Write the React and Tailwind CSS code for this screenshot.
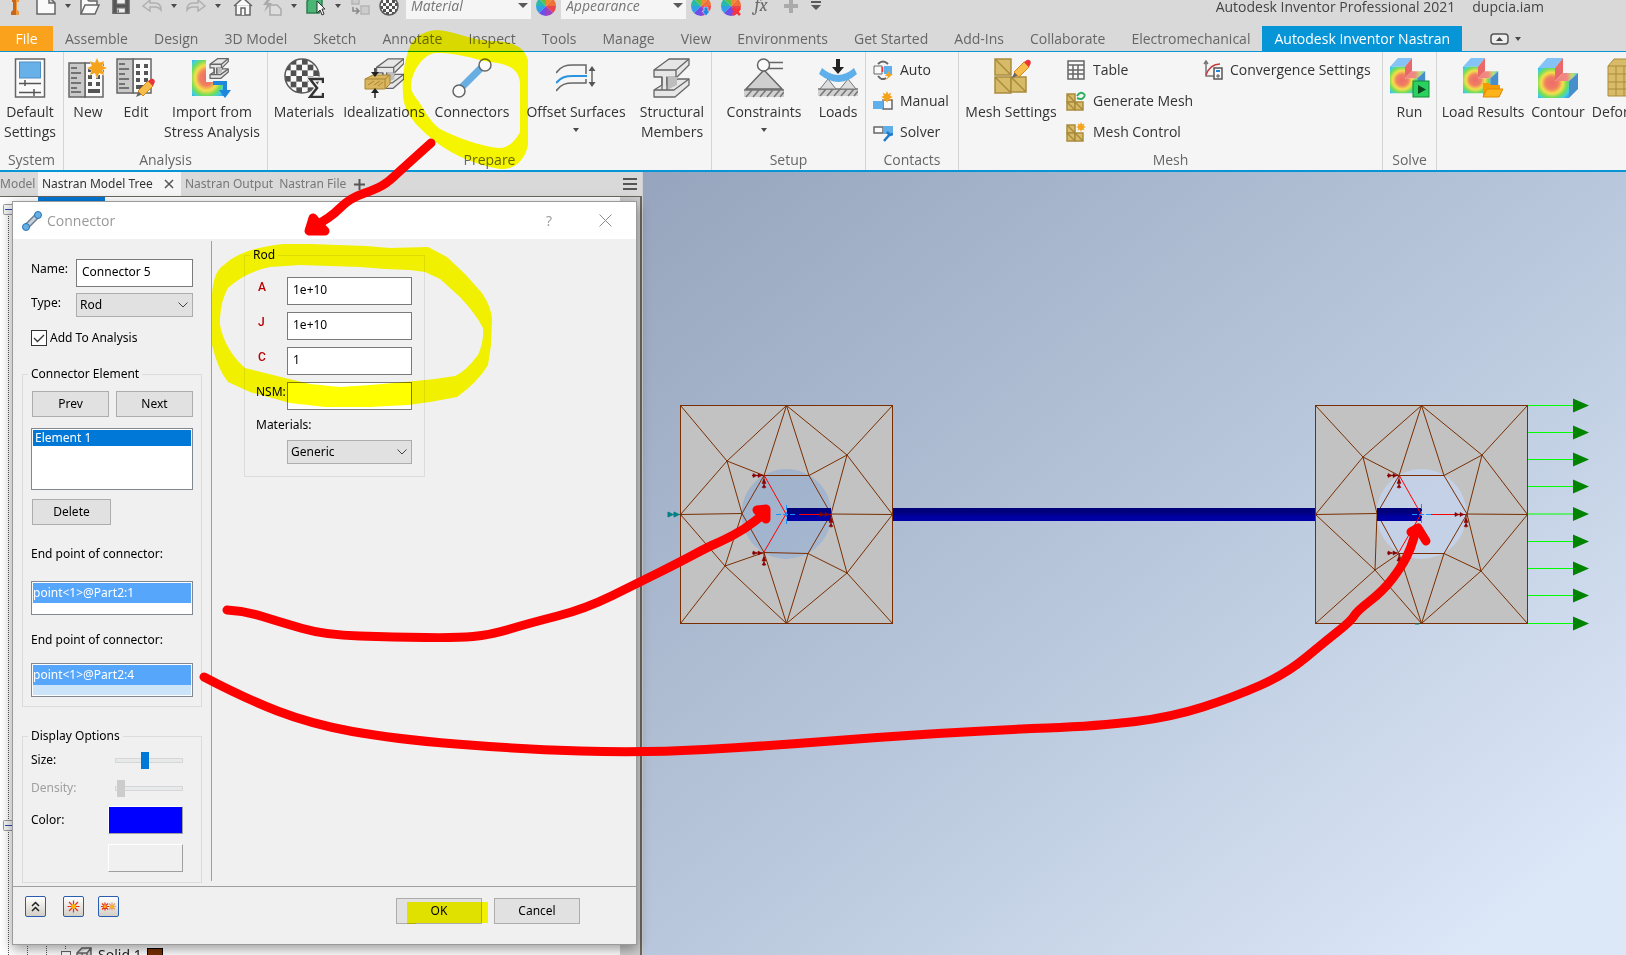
import { useState } from "react";

const tabs = [
  "Assemble",
  "Design",
  "3D Model",
  "Sketch",
  "Annotate",
  "Inspect",
  "Tools",
  "Manage",
  "View",
  "Environments",
  "Get Started",
  "Add-Ins",
  "Collaborate",
  "Electromechanical",
];

/* ---------- small icons of the quick access bar ---------- */

function Caret() {
  return (
    <svg className="w-[6px] shrink-0" viewBox="0 0 6 4" fill="#4a4a4a">
      <path d="M0 0h6L3 4z" />
    </svg>
  );
}

function QIcon({ label, children, className = "w-5" }) {
  return (
    <button aria-label={label} className={`${className} shrink-0`}>
      <svg className="h-5 w-full" viewBox="0 0 20 20" fill="none" stroke="#666" strokeWidth="1.5">
        {children}
      </svg>
    </button>
  );
}

function Wheel({ children }) {
  const colors = ["#f2892f", "#f0703a", "#e8454d", "#a03fc0", "#6b4fe8", "#2f9fe8", "#27b9a9", "#5fc048"];
  return (
    <svg className="h-5 w-5 shrink-0" viewBox="0 0 20 20">
      {colors.map((c, i) => {
        const a = (i * Math.PI) / 4 - Math.PI / 2;
        const b = a + Math.PI / 4;
        return (
          <path
            key={c}
            fill={c}
            d={`M10 10L${10 + 10 * Math.cos(a)} ${10 + 10 * Math.sin(a)}A10 10 0 0 1 ${10 + 10 * Math.cos(b)} ${10 + 10 * Math.sin(b)}z`}
          />
        );
      })}
      {children}
    </svg>
  );
}

function Checker({ cx, cy, r, id }) {
  return (
    <g>
      <clipPath id={id}>
        <circle cx={cx} cy={cy} r={r} />
      </clipPath>
      <g clipPath={`url(#${id})`} stroke="none">
        <rect x={cx - r} y={cy - r} width={2 * r} height={2 * r} fill="#fafafa" />
        {[0, 1, 2, 3, 4, 5].map((i) =>
          [0, 1, 2, 3, 4, 5].map((j) =>
            (i + j) % 2 ? (
              <rect
                key={`${i}-${j}`}
                x={cx - r + (i * r) / 3}
                y={cy - r + (j * r) / 3}
                width={r / 3}
                height={r / 3}
                fill="#505050"
              />
            ) : null
          )
        )}
      </g>
      <circle cx={cx} cy={cy} r={r} fill="none" stroke="#5a5a5a" strokeWidth="1.5" />
    </g>
  );
}

function PickBox({ label }) {
  return (
    <div className="grid w-[125px] shrink-0 items-center bg-[#f5f5f5]">
      <select
        aria-label={label}
        className="col-start-1 row-start-1 h-[27px] appearance-none pl-[5px] text-sm leading-4 text-[#777] italic"
      >
        <option>{label}</option>
      </select>
      <svg
        className="pointer-events-none col-start-1 row-start-1 mr-[3px] w-[10px] justify-self-end"
        viewBox="0 0 10 5"
        fill="#5a5a5a"
      >
        <path d="M0 0h10L5 5z" />
      </svg>
    </div>
  );
}

function QuickAccess() {
  return (
    <div className="h-[26px] overflow-hidden">
      <div className="-mt-2 flex h-[27px] items-center pl-[3px]">
        <div className="flex items-center gap-[9px]">
          <QIcon label="Inventor" className="w-6">
            <path d="M7 3h7v3h-2v8l2 2v3H6v-3l2-2V6H7z" fill="#c8661c" stroke="none" />
            <path d="M11 3h3v3h-2v8l2 2v3h-3z" fill="#f09a3e" stroke="none" />
          </QIcon>
          <QIcon label="New">
            <path d="M1 1h12l6 6v11H1zM13 1v6h6" fill="#fafafa" />
          </QIcon>
          <Caret />
          <QIcon label="Open">
            <path d="M1 18V3h6l2 2h8v4" fill="#fafafa" />
            <path d="M1 18l4-9h14l-4 9z" fill="#fafafa" />
          </QIcon>
        </div>
        <div className="ml-3 flex items-center gap-3">
          <QIcon label="Save" className="w-[18px]">
            <path d="M1 2h18v16H1z" fill="#555" />
            <path d="M5 2h10v6H5zM5 12h10v6H5z" fill="#eee" />
            <path d="M7 14v3" />
          </QIcon>
          <div className="flex items-center gap-[9px]">
            <QIcon label="Undo">
              <path d="M1 10l7-6v3h5c4 0 6 3 6 7-2-3-4-3-6-3H8v4z" stroke="#b0b0b0" />
            </QIcon>
            <Caret />
            <QIcon label="Redo">
              <path d="M19 10l-7-6v3H7c-4 0-6 3-6 7 2-3 4-3 6-3h5v4z" stroke="#b0b0b0" />
            </QIcon>
            <Caret />
          </div>
          <div className="flex items-center gap-[9px]">
            <QIcon label="Home">
              <path d="M3 9v10h14V9M1 10l9-8 9 8" fill="#fafafa" />
              <path d="M8 19v-7h4v7" fill="#fafafa" />
            </QIcon>
            <QIcon label="Update">
              <path d="M7 1L1 9h4l-3 7 8-9H6l4-6z" fill="#aaa" stroke="none" />
              <path d="M8 9h7l4 4v6H8z" fill="#ddd" stroke="#aaa" />
            </QIcon>
            <Caret />
            <QIcon label="Select">
              <path d="M1 5l4-3h11v11l-3 4H1z" fill="#49b675" stroke="#2f7f50" />
              <path d="M11 5v12l3-3 2 5 2-1-2-5h3z" fill="#f5f5f5" stroke="#333" strokeWidth="1" />
            </QIcon>
            <Caret />
            <QIcon label="Return">
              <path d="M2 1h7v7H2zM11 10h8v8h-8z" fill="#ccc" stroke="#b5b5b5" />
              <path d="M3 11v4h5M6 12l3 3-3 3" stroke="#888" />
            </QIcon>
            <QIcon label="Material browser">
              <Checker cx={10} cy={10} r={9} id="qchk" />
            </QIcon>
          </div>
        </div>
        <div className="ml-[7px] flex items-center gap-[5px]">
          <PickBox label="Material" />
          <Wheel />
          <PickBox label="Appearance" />
          <div className="flex items-center gap-[10px]">
            <Wheel>
              <path d="M13 11h4v4h2l-4 5-4-5h2z" fill="#1e88e5" stroke="#fff" strokeWidth=".5" />
            </Wheel>
            <Wheel>
              <path d="M12 12l7 7M19 12l-7 7" stroke="#f33" strokeWidth="2.5" />
            </Wheel>
            <button className="w-5 font-serif text-lg leading-4 text-[#6a6a6a] italic">fx</button>
            <QIcon label="Add">
              <path d="M8 3h4v5h5v4h-5v5H8v-5H3V8h5z" fill="#aaa" stroke="none" />
            </QIcon>
            <svg className="w-[10px]" viewBox="0 0 10 9" fill="#5a5a5a">
              <path d="M0 0h10v2H0zM0 4h10L5 9z" />
            </svg>
          </div>
        </div>
        <div className="mr-[82px] ml-auto flex gap-[17px] pt-[3px] text-sm leading-none whitespace-nowrap text-[#444]">
          <span>Autodesk Inventor Professional 2021</span>
          <span>dupcia.iam</span>
        </div>
      </div>
    </div>
  );
}

function TabRow() {
  return (
    <nav className="flex h-[26px] items-stretch border-b border-[#0696d7] text-sm whitespace-nowrap text-[#666]">
      <button className="w-[53px] bg-[#faa21b] text-white">File</button>
      <div className="flex gap-[2px]">
        {tabs.map((t) => (
          <button key={t} className="px-3">
            {t}
          </button>
        ))}
      </div>
      <button className="bg-[#0696d7] px-3 text-white">Autodesk Inventor Nastran</button>
      <button aria-label="Minimize ribbon" className="ml-7 flex items-center gap-[6px]">
        <svg className="h-3 w-[19px]" viewBox="0 0 19 12">
          <rect x="1" y="1" width="17" height="10" rx="3" fill="#eee" stroke="#555" strokeWidth="1.5" />
          <path d="M6 8h7L9.500 4z" fill="#444" />
        </svg>
        <Caret />
      </button>
    </nav>
  );
}

/* ---------- large ribbon icons, 40 x 40 ---------- */

function Star({ x, y, r, fill = "#f5a31a" }) {
  const pts = [];
  for (let i = 0; i < 16; i++) {
    const a = (i * Math.PI) / 8;
    const d = i % 2 ? r * 0.55 : r;
    pts.push(`${x + d * Math.sin(a)},${y - d * Math.cos(a)}`);
  }
  return <polygon points={pts.join(" ")} fill={fill} stroke="none" />;
}

function DefaultIcon() {
  return (
    <g>
      <rect x="5.500" y="1" width="29" height="38" fill="#fafafa" stroke="#666" strokeWidth="1.5" />
      <rect x="9.500" y="4" width="21" height="16" fill="#68b1e8" stroke="#4d8fc4" />
      <path d="M9 25.500h22M9 34.500h22M15 22v6M24 31v7" stroke="#555" strokeWidth="1.5" fill="none" />
    </g>
  );
}

function Sheets() {
  return (
    <g>
      <path d="M17 5h18v34H17z" fill="#fafafa" stroke="#666" strokeWidth="1.500" />
      <path d="M1 5h16v34H1z" fill="#c9c9c9" stroke="#666" strokeWidth="1.500" />
      <path d="M3 10h6M3 15h10M3 20h6M3 25h10M3 30h6M3 34h10" stroke="#555" strokeWidth="1.500" />
      <path d="M20 10h4v4h-4zM28 10h4v4h-4zM20 17h4v4h-4zM28 17h4v4h-4zM20 24h4v4h-4zM28 24h4v4h-4zM20 31h12v4H20z" fill="#555" />
    </g>
  );
}

function NewIcon() {
  return (
    <g>
      <Sheets />
      <Star x={29} y={10} r={11} fill="#f5f5f5" />
      <Star x={29} y={10} r={10} />
    </g>
  );
}

function Pencil({ x = 0, y = 0 }) {
  return (
    <g transform={`translate(${x} ${y})`}>
      <path d="M0 19l3-7 4 4z" fill="#666" />
      <path d="M2 13L12 3l5 5L7 18z" fill="#f7bd4a" stroke="#d08a1c" />
      <path d="M12 3l3-2c3-1 5 2 3 5l-1 2z" fill="#ee3338" />
    </g>
  );
}

function EditIcon() {
  return (
    <g>
      <g transform="translate(0 -4)">
        <Sheets />
      </g>
      <Pencil x={20} y={20} />
    </g>
  );
}

function Beam({ scale = 1, x = 0, y = 0 }) {
  return (
    <g transform={`translate(${x} ${y}) scale(${scale})`} stroke="#666" strokeWidth={1.3 / scale} strokeLinejoin="round">
      <path d="M2 12L17 1h20v6L25 19H15v8l11-6h11v6L23 39H2v-7l8-5V19H2z" fill="#e6e6e6" />
      <path d="M15 18h10v9l-10 5z" fill="#bdbdbd" stroke="none" />
      <path d="M2 12h22L37 1M24 12v7M10 19v13M15 19v13M2 32h20l15-11" fill="none" />
    </g>
  );
}

function ImportIcon() {
  return (
    <g>
      <path d="M0 2h14v22h18v14H0z" fill="url(#heat)" />
      <Beam scale={0.52} x={17} y={0} />
      <path d="M21 23h14v9h4l-6 8-6-8h4v-5H21z" fill="#1f86dd" />
    </g>
  );
}

function MaterialsIcon() {
  return (
    <g>
      <Checker cx={18} cy={18} r={17} id="mchk" />
      <path d="M39 25V21H26l7 9-7 9h13v-4" fill="none" stroke="#f5f5f5" strokeWidth="5" />
      <path d="M39 25V21H26l7 9-7 9h13v-4" fill="none" stroke="#333" strokeWidth="2.500" />
    </g>
  );
}

function IdealIcon() {
  return (
    <g>
      <Beam scale={0.78} x={11} y={0} />
      <path d="M1 21l8-4h17v9l-5 5H1z" fill="#d8b55e" stroke="#a8852f" />
      <path d="M1 21h20l5-4M21 21v9M4 27l6-4M10 27l6-4M14 28l5-4" fill="none" stroke="#a8852f" />
      <path d="M11 10v5M11 33v7" stroke="#222" strokeWidth="1.500" />
      <path d="M7 14h8l-4 5zM7 35h8l-4-5z" fill="#222" />
    </g>
  );
}

function ConnectorIcon() {
  return (
    <g>
      <path d="M10 29L29 10" stroke="#68aee3" strokeWidth="7" />
      <circle cx="7" cy="33" r="6" fill="#fafafa" stroke="#666" strokeWidth="1.500" />
      <circle cx="33" cy="7" r="6" fill="#fafafa" stroke="#666" strokeWidth="1.500" />
    </g>
  );
}

function OffsetIcon() {
  return (
    <g fill="none" stroke="#666" strokeWidth="1.500">
      <path d="M0 15C5 8 10 7 17 7h13v9M0 33c5-7 10-8 17-8h13v-4" />
      <path d="M0 25c5-6 10-7 17-7h14" stroke="#2a93e0" strokeWidth="2" />
      <path d="M36 10v17" />
      <path d="M32.500 13l3.500-5 3.500 5zM32.500 24l3.500 5 3.500-5z" fill="#555" stroke="none" />
    </g>
  );
}

function Hatch() {
  return (
    <g>
      <rect x="0" y="32" width="40" height="7" fill="#d0d0d0" />
      <path d="M0 32h40M2 39l6-7M9 39l6-7M16 39l6-7M23 39l6-7M30 39l6-7M36 39l4-5" stroke="#777" strokeWidth="1.500" />
    </g>
  );
}

function ConstraintIcon() {
  return (
    <g>
      <Hatch />
      <path d="M20 12L2 31h36z" fill="#cfcfcf" stroke="#666" strokeWidth="1.500" />
      <path d="M24 4.500h15M24 10.500h15" stroke="#666" strokeWidth="1.500" />
      <circle cx="19.500" cy="7" r="6" fill="#fafafa" stroke="#666" strokeWidth="1.500" />
    </g>
  );
}

function LoadsIcon() {
  return (
    <g>
      <g transform="translate(0 -1)">
        <Hatch />
      </g>
      <path d="M10 21L2 31h16zM30 21l-8 10h16z" fill="#ddd" stroke="#777" />
      <path d="M4 10q16 14 32 0l3 6q-18 16-38 0z" fill="#5fb0ea" />
      <path d="M18 1h4v8h4l-6 7-6-7h4z" fill="#222" />
    </g>
  );
}

function Crate({ x, y, s }) {
  return (
    <path
      d={`M${x} ${y}h${s}v${s}h${-s}zl${s} ${s}`}
      fill="#d8bb68"
      stroke="#a98c3c"
      strokeWidth="1.500"
    />
  );
}

function MeshIcon() {
  return (
    <g>
      <Crate x={4} y={1} s={16} />
      <Crate x={4} y={19} s={16} />
      <Crate x={20} y={19} s={15} />
      <Pencil x={21} y={1} />
    </g>
  );
}

function Cube() {
  return (
    <g>
      <path d="M0 10L9 0h16l-8 10z" fill="#83c3f7" />
      <path d="M0 10h17v13h14v17H0z" fill="url(#heat)" />
      <path d="M17 10l8-10v15l-8 8z" fill="#e9696a" />
      <path d="M17 23l8-8h15l-9 8z" fill="url(#step)" />
      <path d="M31 23l9-8v16l-9 9z" fill="#478fcb" />
    </g>
  );
}

function RunIcon() {
  return (
    <g>
      <g transform="scale(.88)">
        <Cube />
      </g>
      <rect x="23" y="23" width="16" height="16" fill="#2bd160" stroke="#138a38" />
      <path d="M28 27v9l8-4.500z" fill="#0a4a1c" />
    </g>
  );
}

function LoadResultsIcon() {
  return (
    <g>
      <g transform="scale(.88)">
        <Cube />
      </g>
      <path d="M20 39V25h6l2 2h9v4h3l-4 8z" fill="#f59b00" />
      <path d="M20 39l4-8h16l-4 8z" fill="#ffb31a" stroke="#e08900" />
    </g>
  );
}

function DeformIcon() {
  return (
    <g fill="#d8bb68" stroke="#a98c3c">
      <path d="M3 38V8l6-7h22v10h8v20l-8 7z" />
      <path d="M3 8h24l6-7M3 16h24M3 24h33M3 31h33M11 8v30M19 8v30M27 8v30" fill="none" />
    </g>
  );
}

/* ---------- ribbon ---------- */

function Panel({ title, className, children }) {
  return (
    <section className={`${className} flex flex-col border-r border-[#d4d4d4]`}>
      <div className="flex flex-1">{children}</div>
      <h2 className="h-5 text-center text-sm text-[#666]">{title}</h2>
    </section>
  );
}

function Tool({ icon, lines, menu, className }) {
  return (
    <button className={`${className} flex shrink-0 flex-col items-center pt-[6px] whitespace-nowrap`}>
      <svg className="mb-1 h-10 w-10 shrink-0" viewBox="0 0 40 40">
        {icon}
      </svg>
      {lines.map((l) => (
        <span key={l} className="leading-5">
          {l}
        </span>
      ))}
      {menu && (
        <span className="flex h-4 items-center">
          <Caret />
        </span>
      )}
    </button>
  );
}

function SmallTool({ icon, label }) {
  return (
    <button className="flex h-[31px] items-center gap-[7px] whitespace-nowrap">
      <svg className="h-5 w-5 shrink-0" viewBox="0 0 20 20">
        {icon}
      </svg>
      {label}
    </button>
  );
}

function Ribbon() {
  return (
    <div className="flex h-[120px] shrink-0 overflow-hidden border-b-2 border-[#0696d7] bg-[#f5f5f5] text-sm text-[#333]">
      <Panel title="System" className="w-16 shrink-0">
        <Tool icon={<DefaultIcon />} lines={["Default", "Settings"]} className="w-[60px]" />
      </Panel>
      <Panel title="Analysis" className="w-[204px] shrink-0">
        <Tool icon={<NewIcon />} lines={["New"]} className="w-12" />
        <Tool icon={<EditIcon />} lines={["Edit"]} className="w-12" />
        <Tool icon={<ImportIcon />} lines={["Import from", "Stress Analysis"]} className="w-[104px]" />
      </Panel>
      <Panel title="Prepare" className="w-[444px] shrink-0">
        <Tool icon={<MaterialsIcon />} lines={["Materials"]} className="w-[72px]" />
        <Tool icon={<IdealIcon />} lines={["Idealizations"]} className="w-[88px]" />
        <Tool icon={<ConnectorIcon />} lines={["Connectors"]} className="w-[88px]" />
        <Tool icon={<OffsetIcon />} lines={["Offset Surfaces"]} menu className="w-[120px]" />
        <Tool icon={<Beam />} lines={["Structural", "Members"]} className="w-[72px]" />
      </Panel>
      <Panel title="Setup" className="w-[154px] shrink-0">
        <Tool icon={<ConstraintIcon />} lines={["Constraints"]} menu className="w-[104px]" />
        <Tool icon={<LoadsIcon />} lines={["Loads"]} className="w-11" />
      </Panel>
      <Panel title="Contacts" className="w-[93px] shrink-0">
        <div className="flex flex-col pt-[2px] pl-[7px]">
          <SmallTool
            label="Auto"
            icon={
              <g>
                <path d="M1 6h8v8H1z" fill="#fafafa" stroke="#666" />
                <path d="M11 6h8v8h-8z" fill="#5fb0ea" />
                <path d="M5 4q5-5 10 0M5 16q4 5 8 2" fill="none" stroke="#666" strokeWidth="2" />
                <path d="M9.500 7v5" stroke="#e33" strokeWidth="1.500" />
                <path d="M17 10l-5 6h3l-2 4 7-6h-3z" fill="#f5a31a" />
              </g>
            }
          />
          <SmallTool
            label="Manual"
            icon={
              <g>
                <path d="M10 9h9v9H10z" fill="#fafafa" stroke="#666" strokeWidth="1.500" />
                <path d="M0 10h10v8H0z" fill="#5fb0ea" />
                <Star x={14} y={6} r={6} />
              </g>
            }
          />
          <SmallTool
            label="Solver"
            icon={
              <g>
                <path d="M1 5h9v6H1z" fill="#fafafa" stroke="#666" strokeWidth="1.500" />
                <path d="M10 4h10v8H10z" fill="#5fb0ea" />
                <path d="M11 19l6-7M14 10l3 3 3-1" stroke="#1f78c8" strokeWidth="2.500" fill="none" />
              </g>
            }
          />
        </div>
      </Panel>
      <Panel title="Mesh" className="w-[424px] shrink-0">
        <Tool icon={<MeshIcon />} lines={["Mesh Settings"]} className="w-[104px]" />
        <div className="flex w-[140px] flex-col pt-[2px] pl-[3px]">
          <SmallTool
            label="Table"
            icon={
              <path
                d="M2 1h16v18H2zM2 5h16M2 10h16M2 14h16M7 5v14M12 5v14"
                fill="#fafafa"
                stroke="#666"
                strokeWidth="1.500"
              />
            }
          />
          <SmallTool
            label="Generate Mesh"
            icon={
              <g>
                <Crate x={1} y={3} s={8} />
                <Crate x={1} y={11} s={8} />
                <Crate x={9} y={11} s={8} />
                <path d="M11 5q4-6 8-1M19 4q-2 6-8 3" fill="none" stroke="#2eae5b" strokeWidth="2" />
              </g>
            }
          />
          <SmallTool
            label="Mesh Control"
            icon={
              <g>
                <Crate x={1} y={3} s={8} />
                <Crate x={1} y={11} s={8} />
                <Crate x={9} y={11} s={8} />
                <Star x={15} y={5} r={5} />
              </g>
            }
          />
        </div>
        <div className="flex flex-col pt-[2px]">
          <SmallTool
            label="Convergence Settings"
            icon={
              <g fill="none">
                <path d="M3 1v15h8M1 4l2-3 2 3" stroke="#777" strokeWidth="1.500" />
                <path d="M3 15Q7 4 17 4" stroke="#c73a3a" strokeWidth="1.500" />
                <path d="M11 8h8v11h-8z" fill="#fafafa" stroke="#555" strokeWidth="1.500" />
                <path d="M13 11h4" stroke="#1f86dd" strokeWidth="2" />
                <path d="M13 16h4M15 14v4" stroke="#555" />
              </g>
            }
          />
        </div>
      </Panel>
      <Panel title="Solve" className="w-[54px] shrink-0">
        <Tool icon={<RunIcon />} lines={["Run"]} className="w-[53px]" />
      </Panel>
      <section className="flex min-w-0 flex-1 pl-[2px]">
        <Tool icon={<LoadResultsIcon />} lines={["Load Results"]} className="w-[88px]" />
        <Tool icon={<Cube />} lines={["Contour"]} className="w-[62px]" />
        <Tool icon={<DeformIcon />} lines={["Deformed"]} className="w-[72px]" />
      </section>
    </div>
  );
}

/* ---------- connector dialog ---------- */

function Group({ title, className, children }) {
  return (
    <fieldset className={`${className} border border-[#dcdcdc]`}>
      <legend className="px-[3px] leading-4">{title}</legend>
      {children}
    </fieldset>
  );
}

function TextBox({ id, value }) {
  return (
    <input
      id={id}
      defaultValue={value}
      className="h-7 min-w-0 border border-[#7a7a7a] bg-white pb-1 pl-[5px]"
    />
  );
}

function DropDown({ id, value, className = "" }) {
  return (
    <div className={`${className} grid items-center`}>
      <select
        id={id}
        className="col-start-1 row-start-1 h-6 appearance-none border border-[#adadad] bg-[#e1e1e1] pl-[3px]"
      >
        <option>{value}</option>
      </select>
      <svg
        className="pointer-events-none col-start-1 row-start-1 mr-[5px] w-[10px] justify-self-end"
        viewBox="0 0 10 6"
        fill="none"
        stroke="#444"
      >
        <path d="M.5.5L5 5 9.500.5" />
      </svg>
    </div>
  );
}

function PushButton({ children, className }) {
  return (
    <button className={`${className} h-[26px] border border-[#adadad] bg-[#e1e1e1]`}>{children}</button>
  );
}

function PointList({ label, value, gap = "gap-[17px]", fill = "bg-white" }) {
  return (
    <div className={`${gap} flex flex-col`}>
      <p className="leading-5">{label}</p>
      <div className="h-[34px] border border-[#828790] bg-white p-[1px]">
        <ul role="listbox" aria-label={label} className={`${fill} h-full`}>
          <li role="option" aria-selected="true" className="h-5 bg-[#56a6fb] leading-5 text-white">
            {value}
          </li>
        </ul>
      </div>
    </div>
  );
}

const sliderClass =
  "h-[17px] w-[68px] appearance-none bg-transparent [&::-webkit-slider-runnable-track]:h-[5px] [&::-webkit-slider-runnable-track]:border [&::-webkit-slider-runnable-track]:border-[#d6d6d6] [&::-webkit-slider-runnable-track]:bg-[#e7eaea] [&::-webkit-slider-thumb]:-mt-[7px] [&::-webkit-slider-thumb]:h-[17px] [&::-webkit-slider-thumb]:w-2 [&::-webkit-slider-thumb]:appearance-none [&::-webkit-slider-thumb]:bg-[#0078d7] disabled:[&::-webkit-slider-thumb]:bg-[#ccc]";

function TinyButton({ label, children }) {
  return (
    <button
      aria-label={label}
      className="flex h-[21px] w-[21px] items-center justify-center rounded-[2px] border border-[#2a5db0] bg-linear-to-b from-white to-[#d3cfc6]"
    >
      <svg className="h-[17px] w-[17px]" viewBox="0 0 17 17">
        {children}
      </svg>
    </button>
  );
}

function Spark({ x, y, r, color = "#e8301c" }) {
  const d = r * 0.75;
  return (
    <g stroke={color} strokeWidth="1.200">
      <path d={`M${x - r} ${y}h${2 * r}M${x} ${y - r}v${2 * r}M${x - d} ${y - d}l${2 * d} ${2 * d}M${x + d} ${y - d}l${-2 * d} ${2 * d}`} />
      <circle cx={x} cy={y} r={r / 2.5} fill="#ffb400" stroke="none" />
    </g>
  );
}

function ConnectorDialog() {
  const [added, setAdded] = useState(true);

  return (
    <div
      role="dialog"
      aria-label="Connector"
      className="absolute top-[29px] left-3 flex h-[744px] w-[625px] flex-col border border-[#9b9b9b] bg-[#f0f0f0] font-['Noto_Sans',sans-serif] text-xs text-black shadow-[0_4px_12px_rgba(0,0,0,0.4)]"
    >
      <div className="flex h-[37px] items-center bg-white pr-6 pl-[9px]">
        <svg className="h-5 w-5" viewBox="0 0 20 20">
          <path d="M4 16L16 4" stroke="#6f7d8c" strokeWidth="6" />
          <path d="M4 16L16 4" stroke="#c3d3e2" strokeWidth="3" />
          <circle cx="4" cy="16" r="3.500" fill="#64b0e6" stroke="#2a72ae" />
          <circle cx="16" cy="4" r="3.500" fill="#64b0e6" stroke="#2a72ae" />
        </svg>
        <h1 className="ml-[5px] flex-1 font-['Open_Sans',sans-serif] text-sm text-[#999]">Connector</h1>
        <button className="mr-[47px] font-['Open_Sans',sans-serif] text-sm text-[#999]">?</button>
        <button aria-label="Close">
          <svg className="h-[13px] w-[13px]" viewBox="0 0 13 13" stroke="#8a8a8a">
            <path d="M.5.5l12 12M12.500.5l-12 12" />
          </svg>
        </button>
      </div>

      <div className="flex min-h-0 flex-1">
        <div className="mt-[2px] mb-[5px] w-[199px] border-r border-[#a0a0a0] px-[9px] pt-[18px]">
          <div className="grid grid-cols-[45px_117px] gap-y-[6px] pl-[9px] leading-5">
            <label htmlFor="name">Name:</label>
            <TextBox id="name" value="Connector 5" />
            <label htmlFor="type">Type:</label>
            <DropDown id="type" value="Rod" />
          </div>
          <label className="mt-[13px] flex items-center gap-[3px] pl-[9px] leading-4">
            <span className="grid h-4 w-4 items-center justify-items-center">
              <input
                type="checkbox"
                checked={added}
                onChange={(e) => setAdded(e.target.checked)}
                className="col-start-1 row-start-1 h-4 w-4 appearance-none border border-[#333] bg-white"
              />
              {added && (
                <svg
                  className="pointer-events-none col-start-1 row-start-1 h-3 w-3"
                  viewBox="0 0 12 12"
                  fill="none"
                  stroke="#333"
                  strokeWidth="1.300"
                >
                  <path d="M1 6l3.500 3.500L11 3" />
                </svg>
              )}
            </span>
            Add To Analysis
          </label>

          <Group title="Connector Element" className="mt-5 px-[5px]">
            <div className="px-[3px] py-[9px]">
              <div className="flex justify-between pl-px">
                <PushButton className="w-[77px]">Prev</PushButton>
                <PushButton className="w-[77px]">Next</PushButton>
              </div>
              <div className="mt-[11px] h-[62px] border border-[#828790] bg-white p-[1px]">
                <ul role="listbox" aria-label="Elements">
                  <li role="option" aria-selected="true" className="h-4 bg-[#0078d7] pl-[2px] leading-4 text-white">
                    Element 1
                  </li>
                </ul>
              </div>
              <PushButton className="mt-[9px] mb-[19px] ml-px w-[79px]">Delete</PushButton>
              <PointList label="End point of connector:" value="point<1>@Part2:1" />
              <div className="h-[15px]" />
              <PointList
                label="End point of connector:"
                value="point<1>@Part2:4"
                gap="gap-[13px]"
                fill="bg-[#cce4f9]"
              />
            </div>
          </Group>

          <Group title="Display Options" className="mt-[21px] px-[5px]">
            <div className="grid grid-cols-[77px_75px] items-center px-[3px] pt-[6px] pb-[10px] leading-5">
              <label htmlFor="size">Size:</label>
              <input id="size" type="range" defaultValue="43" className={`${sliderClass} justify-self-end`} />
              <label htmlFor="density" className="py-2 text-[#a0a0a0]">
                Density:
              </label>
              <input id="density" type="range" disabled defaultValue="2" className={`${sliderClass} justify-self-end`} />
              <span>Color:</span>
              <button
                aria-label="Color"
                className="h-7 border border-t-white border-r-[#a0a0a0] border-b-[#a0a0a0] border-l-white bg-[#0000ff]"
              />
              <button
                aria-label="Preview"
                className="col-start-2 mt-[10px] h-7 border border-t-white border-r-[#a0a0a0] border-b-[#a0a0a0] border-l-white"
              />
            </div>
          </Group>
        </div>

        <div className="pt-2 pl-8">
          <Group title="Rod" className="w-[181px] px-[5px]">
            <div className="grid grid-cols-[31px_125px] gap-y-[7px] pt-[14px] pb-3 pl-[6px] leading-5">
              <label htmlFor="a" className="pl-[2px] font-['Roboto',sans-serif] font-medium text-[#b80000]">
                A
              </label>
              <TextBox id="a" value="1e+10" />
              <label htmlFor="j" className="pl-[2px] font-['Roboto',sans-serif] font-medium text-[#b80000]">
                J
              </label>
              <TextBox id="j" value="1e+10" />
              <label htmlFor="c" className="pl-[2px] font-['Roboto',sans-serif] font-medium text-[#b80000]">
                C
              </label>
              <TextBox id="c" value="1" />
              <label htmlFor="nsm">NSM:</label>
              <TextBox id="nsm" value="" />
              <label htmlFor="mat" className="col-span-2 leading-4">
                Materials:
              </label>
              <DropDown id="mat" value="Generic" className="col-start-2" />
            </div>
          </Group>
        </div>
      </div>

      <div className="flex h-[58px] shrink-0 items-start border-t border-[#a0a0a0] pt-[9px] pr-14 pl-3">
        <TinyButton label="Collapse">
          <path d="M5 8l3.500-3.500L12 8M5 13l3.500-3.500L12 13" fill="none" stroke="#222" strokeWidth="1.500" />
        </TinyButton>
        <div className="ml-[17px] flex flex-1 gap-[14px]">
          <TinyButton label="Create">
            <Spark x={8.5} y={8.5} r={6} />
          </TinyButton>
          <TinyButton label="Create copy">
            <Spark x={12} y={8.5} r={4} color="#e0a078" />
            <Spark x={5} y={8.5} r={4} />
          </TinyButton>
        </div>
        <div className="flex gap-3 pt-[2px]">
          <PushButton className="w-[86px]">OK</PushButton>
          <PushButton className="w-[86px]">Cancel</PushButton>
        </div>
      </div>
    </div>
  );
}

/* ---------- browser panel behind the dialog ---------- */

function BrowserPanel() {
  return (
    <aside className="relative flex w-[643px] shrink-0 flex-col border-r border-[#cfcfcf]">
      <div className="flex h-6 items-stretch font-['Noto_Sans',sans-serif] text-xs whitespace-nowrap text-[#777]">
        <button className="w-[38px] text-left">Model</button>
        <div className="flex w-[143px] items-center justify-between bg-[#f5f5f5] pr-[7px] pl-1 text-[#333]">
          <button>Nastran Model Tree</button>
          <button aria-label="Close tab">
            <svg className="h-[10px] w-[10px]" viewBox="0 0 10 10" stroke="#555" strokeWidth="1.500">
              <path d="M1 1l8 8M9 1L1 9" />
            </svg>
          </button>
        </div>
        <button className="ml-1">Nastran Output</button>
        <button className="ml-[6px]">Nastran File</button>
        <button aria-label="Add tab" className="ml-2">
          <svg className="h-[11px] w-[11px]" viewBox="0 0 11 11" stroke="#555" strokeWidth="2">
            <path d="M5.500 0v11M0 5.500h11" />
          </svg>
        </button>
        <button aria-label="Panel menu" className="mr-[5px] ml-auto">
          <svg className="h-3 w-[14px]" viewBox="0 0 14 12" stroke="#555" strokeWidth="2">
            <path d="M0 1h14M0 6h14M0 11h14" />
          </svg>
        </button>
      </div>
      <div className="relative flex flex-1 flex-col justify-between overflow-hidden border-t border-r-2 border-[#6a6660] bg-white">
        <div className="ml-[38px] h-1 w-[67px] bg-[#0078d7]" />
        <div className="flex h-[10px] items-start gap-[5px] pl-[60px] font-['Noto_Sans',sans-serif] text-sm leading-5 whitespace-nowrap text-[#222]">
          <svg className="h-5 w-[33px]" viewBox="0 0 33 20" fill="none" stroke="#666">
            <rect x="1.500" y="6.500" width="9" height="9" />
            <path d="M4 11h4" />
            <path d="M17 8l5-5h9v8l-4 4H17zM17 8h10l4-5M27 8v7M22 8v7" strokeWidth="1.500" fill="#ddd" />
          </svg>
          <span>Solid 1</span>
          <span className="mt-[3px] h-4 w-4 border border-black bg-[#7a2e00]" />
        </div>
        <svg className="pointer-events-none absolute top-0 left-0 h-[758px] w-[70px]" viewBox="0 197 70 758" fill="none">
          <path d="M8.500 216V955M27.500 940V955M46.500 940V955M65.500 940V950" stroke="#555" strokeDasharray="1 1" />
          <rect x="3.500" y="204.500" width="11" height="10" rx="1" fill="#f5f5f5" stroke="#999" />
          <path d="M5 209.500h8" stroke="#2a4db0" />
          <rect x="3.500" y="820.500" width="11" height="10" rx="1" fill="#f5f5f5" stroke="#999" />
          <path d="M5 825.500h8" stroke="#2a4db0" />
        </svg>
        <div className="absolute inset-y-0 right-0 w-5 bg-[#cdcdcd]" />
      </div>
      <ConnectorDialog />
    </aside>
  );
}

/* ---------- 3D viewport ---------- */

// Every mesh is a square plate, a hexagon round the hole and four inner nodes
const plates = [
  {
    id: "left",
    x: 680.5,
    mid: 786.5,
    inner: [[727, 461], [847, 455], [847, 573], [725, 566]],
    hex: [[764, 475.5], [809, 475.5], [831, 514], [808, 553.5], [764, 552.5], [742, 513.5]],
  },
  {
    id: "right",
    x: 1315.5,
    mid: 1421.5,
    inner: [[1363, 457], [1482, 455], [1481, 571], [1375, 570]],
    hex: [[1399, 475.5], [1444, 475.5], [1467, 514], [1444, 553.5], [1399, 553.5], [1377, 513.5]],
  },
];

const arrows = [405.5, 432.5, 459.5, 486.5, 514, 541.5, 568.5, 595.5, 623.5];

function Marker({ x, y }) {
  return (
    <g fill="#8b0000" stroke="#8b0000">
      <path d={`M${x - 12} ${y}h12M${x} ${y}v13`} strokeDasharray="3 1" />
      <path d={`M${x - 11} ${y - 2}v4l4-2zM${x - 6} ${y - 2}v4l4-2zM${x - 2} ${y + 8}h4l-2-5zM${x - 2} ${y + 12}h4l-2-3z`} strokeWidth=".5" />
    </g>
  );
}

function Plate({ p }) {
  const x0 = p.x;
  const x1 = p.x + 212;
  const top = 405.5;
  const bottom = 623.5;
  const cy = 514.5;
  const [a, b, c, d] = p.inner;
  const h = p.hex;
  const lines = [
    [[x0, top], a], [a, [p.mid, top]], [a, [x0, cy]], [a, h[0]], [a, h[5]],
    [[p.mid, top], h[0]], [[p.mid, top], h[1]], [[p.mid, top], b],
    [b, [x1, top]], [b, h[1]], [b, h[2]], [b, [x1, cy]],
    [[x1, cy], h[2]], [[x1, cy], c], [c, h[2]], [c, h[3]], [c, [x1, bottom]], [c, [p.mid, bottom]],
    [[p.mid, bottom], h[3]], [[p.mid, bottom], h[4]], [[p.mid, bottom], d],
    [d, h[4]], [d, h[5]], [d, [x0, cy]], [d, [x0, bottom]], [[x0, cy], h[5]],
  ];
  return (
    <g>
      <path
        fillRule="evenodd"
        fill="#c2c2c2"
        d={`M${x0} ${top}H${x1}V${bottom}H${x0}zM${p.mid - 45} 514a45 45 0 1 0 90 0a45 45 0 1 0 -90 0z`}
      />
      <rect x={x0} y={top} width="212" height="218" fill="none" stroke="#7a2e00" />
      <path d={lines.map(([m, n]) => `M${m[0]} ${m[1]}L${n[0]} ${n[1]}`).join("")} stroke="#7a2e00" fill="none" />
      <polygon points={h.map((v) => v.join(",")).join(" ")} stroke="#7a2e00" fill="none" />
    </g>
  );
}

function Viewport() {
  return (
    <main className="min-w-0 flex-1 overflow-hidden bg-[linear-gradient(to_bottom_right,#96a5bd_0%,#b8c7db_50%,#dce7f8_92%)]">
      <svg className="h-[783px] w-[983px] max-w-none" viewBox="643 172 983 783" aria-label="Finite element model">
        <defs>
          <linearGradient id="rod" x1="0" y1="0" x2="0" y2="1">
            <stop offset="0" stopColor="#000078" />
            <stop offset=".3" stopColor="#00007c" />
            <stop offset=".7" stopColor="#0000a4" />
            <stop offset="1" stopColor="#0000a8" />
          </linearGradient>
        </defs>
        <circle cx="786.500" cy="514" r="45" fill="#8fa6cc" fillOpacity=".25" />
        <circle cx="1421.500" cy="514" r="45" fill="#c4d2e8" fillOpacity=".7" />
        {plates.map((p) => (
          <Plate key={p.id} p={p} />
        ))}
        <rect x="893" y="508" width="422" height="13" fill="url(#rod)" />
        <rect x="787" y="508" width="44" height="13" fill="url(#rod)" />
        <rect x="1377" y="508" width="45" height="13" fill="url(#rod)" />
        <path d="M786 514L764 475M786 514L764 552M799 514.500h32" stroke="#f00" />
        <path d="M1421 514L1399 475M1421 514L1399 552M1430 514.500h36" stroke="#f00" />
        <path d="M776 514.500h20M786.500 505v20M1412 514.500h20M1421.500 504v20" stroke="#1e90ff" strokeDasharray="5 2" />
        <Marker x={764} y={475.5} />
        <Marker x={831} y={514.5} />
        <Marker x={764} y={553} />
        <Marker x={1399} y={475.5} />
        <Marker x={1466} y={514.5} />
        <Marker x={1399} y={553} />
        <path d="M668 512v5l5-2.500zM674 512v5l5-2.500zM668 514.500h12M1415 624h4" fill="#008080" stroke="#008080" />
        {arrows.map((y) => (
          <g key={y}>
            <path d={`M1528 ${y}h46`} stroke="#0f0" />
            <path d={`M1573 ${y - 7}v14l16-7z`} fill="#008400" />
          </g>
        ))}
      </svg>
    </main>
  );
}

/* ---------- pen notes drawn over the window ---------- */

// Curve through the middle of each pair of points, as a pen tool draws it
function smooth(pts) {
  let d = `M${pts[0][0]} ${pts[0][1]}`;
  for (let i = 1; i < pts.length - 1; i++) {
    const [x, y] = pts[i];
    const [nx, ny] = pts[i + 1];
    d += `Q${x} ${y} ${(x + nx) / 2} ${(y + ny) / 2}`;
  }
  const last = pts[pts.length - 1];
  return `${d}L${last[0]} ${last[1]}`;
}

const strokes = [
  [[431, 143], [402, 169], [386, 184], [371, 191], [356, 196], [345, 203], [334, 214], [322, 222], [310, 229]],
  [[227, 610], [245, 611], [280, 622], [325, 635], [394, 637], [456, 638], [490, 635], [530, 623], [585, 609], [640, 582], [680, 562], [708, 547], [722, 541], [745, 529], [765, 513]],
  [[204, 677], [244, 698], [311, 724], [394, 739], [518, 749], [643, 753], [767, 746], [881, 737], [995, 730], [1099, 726], [1172, 717], [1234, 697], [1286, 674], [1327, 640], [1351, 621], [1357, 611], [1383, 591], [1402, 566], [1411, 548], [1416, 530]],
];

function Notes() {
  return (
    <>
      <svg
        className="pointer-events-none absolute top-0 left-0 h-[955px] w-[1626px] max-w-none mix-blend-multiply"
        viewBox="0 0 1626 955"
        fill="#ff0"
        fillRule="evenodd"
      >
        <path d="M407 55C410 40 420 31 437 30C455 31 470 40 490 41C512 41 524 46 528 60V145C525 160 515 170 500 169C480 166 455 156 440 145C420 130 404 115 403 95C402 78 404 66 407 55zM411 85C412 72 422 55 435 53C455 52 470 58 490 62C508 64 518 68 520 82V132C516 140 508 149 498 148C480 146 455 137 440 129C428 120 424 108 416 98C412 92 411 90 411 85z" />
        <path d="M212 295C213 280 216 270 224 265C235 254 255 247 283 244H310L366 246L390 248L428 247L447 257L465 274L482 293Q492 308 492 320L491 345L488 365Q478 382 457 397L430 402L408 405L370 407H325L290 403L250 392L228 382Q218 370 212 345zM220 318Q221 300 228 288Q245 272 270 267L300 265L360 267L385 269L410 270L425 272L440 279L460 297Q476 314 483 328Q484 342 478 355Q465 372 455 376L435 379L405 382L370 385L340 387L310 384L285 378L245 368Q225 350 220 325z" />
        <path d="M407 902h81v21h-72v1h-9z" />
      </svg>
      <svg
        className="pointer-events-none absolute top-0 left-0 h-[955px] w-[1626px] max-w-none"
        viewBox="0 0 1626 955"
        fill="none"
        stroke="#f00"
        strokeWidth="9"
        strokeLinecap="round"
        strokeLinejoin="round"
      >
        {strokes.map((s) => (
          <path key={s[0][0]} d={smooth(s)} />
        ))}
        <path d="M313 218L309 231H325L318 224z" fill="#f00" />
        <path d="M757 510L766 509L766 519z" fill="#f00" />
        <path d="M1411 532L1418 528L1426 541" />
      </svg>
    </>
  );
}

export default function App() {
  return (
    <div className="relative flex h-screen flex-col overflow-hidden bg-[#d9d9d9] font-['Open_Sans',sans-serif]">
      <svg className="absolute h-0 w-0" aria-hidden="true">
        <defs>
          <radialGradient id="heat" cx=".45" cy=".5" r=".7">
            <stop offset="0" stopColor="#ee6b6b" />
            <stop offset=".3" stopColor="#f08060" />
            <stop offset=".5" stopColor="#f5e04a" />
            <stop offset=".7" stopColor="#6fdc5a" />
            <stop offset=".85" stopColor="#3fd0e0" />
            <stop offset="1" stopColor="#3f9fe8" />
          </radialGradient>
          <linearGradient id="step">
            <stop offset="0" stopColor="#f08080" />
            <stop offset=".5" stopColor="#f08a80" />
            <stop offset=".75" stopColor="#b8e070" />
            <stop offset="1" stopColor="#5fc8d8" />
          </linearGradient>
        </defs>
      </svg>
      <QuickAccess />
      <TabRow />
      <Ribbon />
      <div className="flex min-h-0 flex-1">
        <BrowserPanel />
        <Viewport />
      </div>
      <Notes />
    </div>
  );
}
